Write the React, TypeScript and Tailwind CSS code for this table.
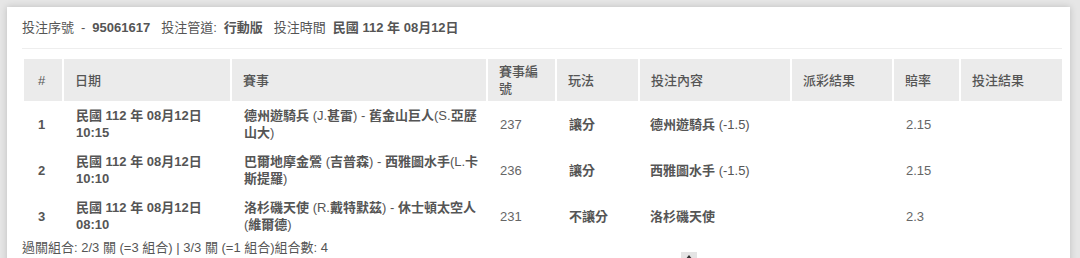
import React from 'react';

type Bet = {
  no: number;
  date: string;
  time: string;
  match: string[];
  matchNo: string;
  play: string;
  pick: string;
  odds: string;
};

const bets: Bet[] = [
  {
    no: 1,
    date: '民國 112 年 08月12日',
    time: '10:15',
    match: ['德州遊騎兵 (J.甚雷) - 舊金山巨人(S.亞歷', '山大)'],
    matchNo: '237',
    play: '讓分',
    pick: '德州遊騎兵 (-1.5)',
    odds: '2.15',
  },
  {
    no: 2,
    date: '民國 112 年 08月12日',
    time: '10:10',
    match: ['巴爾地摩金鶯 (吉普森) - 西雅圖水手(L.卡', '斯提羅)'],
    matchNo: '236',
    play: '讓分',
    pick: '西雅圖水手 (-1.5)',
    odds: '2.15',
  },
  {
    no: 3,
    date: '民國 112 年 08月12日',
    time: '08:10',
    match: ['洛杉磯天使 (R.戴特默茲) - 休士頓太空人', '(維爾德)'],
    matchNo: '231',
    play: '不讓分',
    pick: '洛杉磯天使',
    odds: '2.3',
  },
];

const heads = ['日期', '賽事', '賽事編號', '玩法', '投注內容', '派彩結果', '賠率', '投注結果'];
const widths = ['w-[39px]', 'w-[168px]', 'w-[256px]', 'w-[69px]', 'w-[83px]', 'w-[152px]', 'w-[102px]', 'w-[67px]', 'w-[102px]'];

// chinese glyphs come out heavy in the original, latin bits stay regular
const Mixed = ({ text }: { text: string }) => (
  <>
    {text.split(/([\x20-\x7E]+)/).map((part, i) =>
      /^[\x20-\x7E]+$/.test(part) ? (
        <span key={i} className="font-normal">{part}</span>
      ) : (
        <span key={i} className="font-semibold">{part}</span>
      )
    )}
  </>
);

export default function App() {
  return (
    <div className="w-[1080px] h-[258px] overflow-hidden bg-[#e6e6e6] pl-[7px] pt-[7px] font-['Liberation_Sans','Noto_Sans_CJK_TC',sans-serif] text-[13px] leading-[17px] text-[#555]">
      <div className="relative w-[1063px] h-[260px] bg-white shadow-[0_0_7px_rgba(0,0,0,0.18)] pl-[15px] pr-[8px] pt-[12px]">
        {/* order info */}
        <div className="flex items-center gap-[7px] pb-[12px] border-b border-[#eeeeee]">
          <span>投注序號</span>
          <span>-</span>
          <span className="font-bold">95061617</span>
          <span className="ml-[4px]">投注管道:</span>
          <span className="font-bold">行動版</span>
          <span className="ml-[4px]">投注時間</span>
          <span className="font-bold">民國 112 年 08月12日</span>
        </div>

        <table className="table-fixed border-collapse ml-[2px] mt-[10px] w-[1038px]">
          <colgroup>
            {widths.map((w, i) => (
              <col key={i} className={w} />
            ))}
          </colgroup>
          <thead>
            <tr className="h-[42px] bg-[#ebebeb]">
              <th className="pl-[14px] text-left font-medium">#</th>
              {heads.map((h) => (
                <th key={h} className="border-l-2 border-white pl-[11px] pr-[12px] text-left font-medium">
                  {h}
                </th>
              ))}
            </tr>
          </thead>
          <tbody>
            {bets.map((b) => (
              <tr key={b.no} className="h-[46px]">
                <td className="pl-[14px] font-bold">{b.no}</td>
                <td className="pl-[13px] font-bold">
                  <div>{b.date}</div>
                  <div>{b.time}</div>
                </td>
                <td className="pl-[13px] whitespace-nowrap">
                  {b.match.map((l) => (
                    <div key={l}>
                      <Mixed text={l} />
                    </div>
                  ))}
                </td>
                <td className="pl-[13px] text-[#666]">{b.matchNo}</td>
                <td className="pl-[13px] font-semibold">{b.play}</td>
                <td className="pl-[11px]">
                  <Mixed text={b.pick} />
                </td>
                <td className="pl-[13px]"></td>
                <td className="pl-[13px] text-[#666]">{b.odds}</td>
                <td className="pl-[13px]"></td>
              </tr>
            ))}
          </tbody>
        </table>

        <div>過關組合: 2/3 關 (=3 組合) | 3/3 關 (=1 組合)組合數: 4</div>

        {/* back to top */}
        <div className="absolute left-[674px] top-[245px] w-[16px] h-[16px] bg-[#e4e4e4] flex items-start justify-center">
          <svg width="8" height="6" viewBox="0 0 8 6" className="mt-[3px]">
            <path d="M4 0 L8 5 L0 5 Z" fill="#333" />
          </svg>
        </div>
      </div>
    </div>
  );
}
